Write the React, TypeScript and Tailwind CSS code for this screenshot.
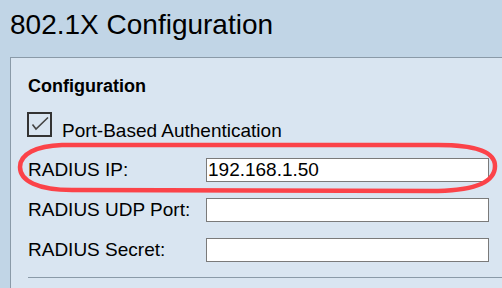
import React from 'react';

const fields = [
  { label: 'RADIUS IP:', value: '192.168.1.50' },
  { label: 'RADIUS UDP Port:', value: '' },
  { label: 'RADIUS Secret:', value: '' },
];

const App: React.FC = () => {
  return (
    <div className="relative w-[502px] h-[288px] overflow-hidden bg-[#c1d5e6] text-black font-['Liberation_Sans',Arial,sans-serif]">
      {/* Page title */}
      <div className="h-[57px] pl-[10px] pt-[11px]">
        <h1 className="text-[28px] leading-[28px] whitespace-nowrap">802.1X Configuration</h1>
      </div>

      {/* Config panel */}
      <div className="ml-[10px] h-[231px] border-l border-t border-[#8a9aa8] bg-[#d9e5f1] pl-[17px] pt-[19px]">
        <h2 className="text-[18px] leading-[18px] font-bold">Configuration</h2>

        <label className="mt-[17px] flex items-start">
          <span className="ml-[-1px] w-[25px] h-[25px] border-2 border-[#333] flex items-center justify-center">
            <svg width="21" height="21" viewBox="0 0 21 21" fill="none">
              <path d="M3.5 10.5 L7 15 L19 3.5" stroke="#444" strokeWidth="1.6" />
            </svg>
          </span>
          <span className="ml-[10px] mt-[9px] text-[19px] leading-[19px] whitespace-nowrap">Port-Based Authentication</span>
        </label>

        <div className="mt-[18px] flex flex-col gap-4">
          {fields.map((f) => (
            <div key={f.label} className="flex items-center h-[24px]">
              <span className="w-[178px] text-[19px] leading-[24px] whitespace-nowrap">{f.label}</span>
              <input
                readOnly
                defaultValue={f.value}
                className="w-[283px] h-[24px] border border-[#7a7a7a] bg-white px-[1px] text-[19px] leading-[22px] outline-none font-['Liberation_Sans',Arial,sans-serif]"
              />
            </div>
          ))}
        </div>

        <div className="mt-[15px] h-px bg-[#8a9aa8]" />
      </div>

      {/* Red highlight drawn over the RADIUS IP row */}
      <svg className="absolute inset-0 pointer-events-none" width="502" height="288" viewBox="0 0 502 288" fill="none">
        <path
          d="M62 145 L438 145 C478 145 495 153 495 166 C495 181 478 190 438 191 L72 190 C38 190 20 181 20 167 C20 154 36 146 62 145 Z"
          stroke="#fb4349"
          strokeWidth="4.5"
        />
      </svg>
    </div>
  );
};

export default App;
